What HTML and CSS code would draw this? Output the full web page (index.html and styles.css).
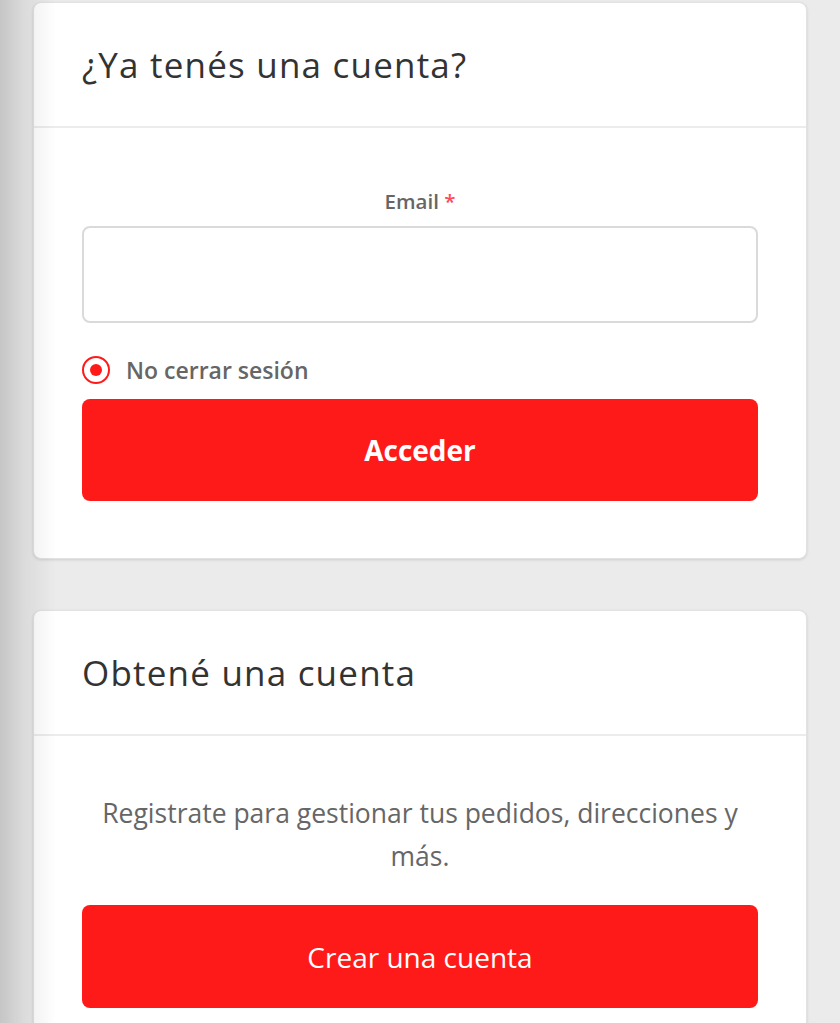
FILE: index.html
```html
<!DOCTYPE html>
<html lang="es">
<head>
<meta charset="utf-8">
<link rel="stylesheet" href="styles.css">
</head>
<body>
<div class="shade"></div>
<main class="page">
  <section class="card">
    <h2 class="card-title">¿Ya tenés una cuenta?</h2>
    <div class="card-body">
      <label class="field-label">Email <span class="req">*</span></label>
      <div class="input"></div>
      <div class="remember">
        <span class="radio"><span class="dot"></span></span>
        <span class="remember-text">No cerrar sesión</span>
      </div>
      <button class="btn btn-bold">Acceder</button>
    </div>
  </section>
  <section class="card">
    <h2 class="card-title">Obtené una cuenta</h2>
    <div class="card-body card-body-info">
      <p class="info">Registrate para gestionar tus pedidos, direcciones y más.</p>
      <button class="btn btn-create">Crear una cuenta</button>
    </div>
  </section>
</main>
</body>
</html>
```
FILE: styles.css
```css
html, body {
  margin: 0;
  padding: 0;
  background: #ebebeb;
  font-family: "Open Sans", Lato, sans-serif;
  height: 100%;
  overflow: hidden;
}
.shade {
  position: fixed;
  left: 0;
  top: 0;
  bottom: 0;
  width: 56px;
  background: linear-gradient(to right, rgba(0,0,0,0.16) 0%, rgba(0,0,0,0.07) 40%, rgba(0,0,0,0.0) 100%);
  z-index: 5;
  pointer-events: none;
}
.page {
  padding: 2px 33px 0 33px;
  display: flex;
  flex-direction: column;
  gap: 51px;
}
.card {
  background: #fff;
  border: 1px solid #e2e2e2;
  border-radius: 8px;
  box-shadow: 0 1px 3px rgba(0,0,0,0.12);
}
.card-title {
  margin: 0;
  padding: 0 48px;
  height: 123px;
  display: flex;
  align-items: center;
  font-size: 35px;
  letter-spacing: 1.2px;
  font-weight: 400;
  color: #333;
  border-bottom: 2px solid #ececec;
}
.card-body {
  padding: 61px 48px 57px;
  display: flex;
  flex-direction: column;
}
.card-body-info {
  padding-top: 56px;
}
.field-label {
  text-align: center;
  font-size: 20.5px;
  line-height: 24px;
  font-weight: 600;
  color: #666;
  margin-bottom: 13px;
}
.req { color: #ff4a5a; }
.input {
  box-sizing: border-box;
  height: 97px;
  border: 2px solid #dadada;
  border-radius: 8px;
}
.remember {
  display: flex;
  align-items: center;
  gap: 16px;
  margin-top: 32px;
  height: 30px;
}
.radio {
  width: 24px;
  height: 24px;
  border: 2px solid #ff1a1a;
  border-radius: 50%;
  display: flex;
  align-items: center;
  justify-content: center;
}
.dot {
  width: 12px;
  height: 12px;
  border-radius: 50%;
  background: #ff1a1a;
}
.remember-text {
  font-size: 23px;
  font-weight: 600;
  color: #666;
}
.btn {
  margin-top: 14px;
  height: 102px;
  border: none;
  border-radius: 8px;
  background: #ff1a1a;
  color: #fff;
  font-family: inherit;
  font-size: 28px;
  font-weight: 400;
}
.btn-bold { font-weight: 700; font-size: 28px; }
.info {
  margin: 0;
  text-align: center;
  font-size: 26.5px;
  line-height: 43px;
  color: #666;
}
.btn-create { margin-top: 27px; height: 103px; }
```
